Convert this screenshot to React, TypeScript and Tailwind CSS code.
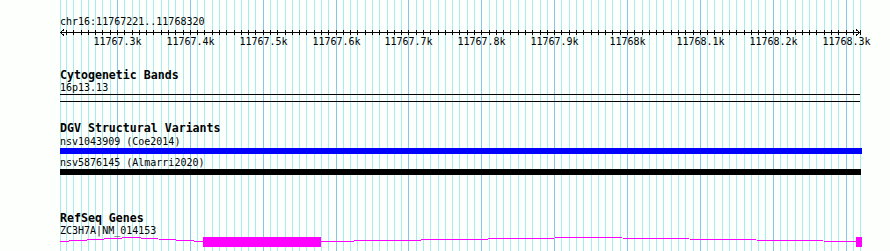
import React from "react";

const START = 11767221;
const px = (bp: number) => Math.floor(60 + (bp - START) * 0.7285);

const gridBps: number[] = [];
for (let bp = 11767220; bp <= 11768320; bp += 10) gridBps.push(bp);

const majors = [
  { bp: 11767300, label: "11767.3k" },
  { bp: 11767400, label: "11767.4k" },
  { bp: 11767500, label: "11767.5k" },
  { bp: 11767600, label: "11767.6k" },
  { bp: 11767700, label: "11767.7k" },
  { bp: 11767800, label: "11767.8k" },
  { bp: 11767900, label: "11767.9k" },
  { bp: 11768000, label: "11768k" },
  { bp: 11768100, label: "11768.1k" },
  { bp: 11768200, label: "11768.2k" },
  { bp: 11768300, label: "11768.3k" },
];

const mono = "'DejaVu Sans Mono', 'Liberation Mono', monospace";

function Grid() {
  return (
    <svg className="absolute inset-0" width={890} height={251} shapeRendering="crispEdges">
      {gridBps.map((bp) => {
        const x = Math.max(60, px(bp)) + 0.5;
        const major = bp % 100 === 0;
        return (
          <line key={bp} x1={x} x2={x} y1={0} y2={251} stroke={major ? "#84c6ec" : "#a8ecf0"} strokeWidth={1} />
        );
      })}
    </svg>
  );
}

function Ruler() {
  const ticks = gridBps.filter((bp) => bp >= START && bp <= 11768320);
  return (
    <svg width={802} height={20} shapeRendering="crispEdges" className="block overflow-visible" overflow="visible">
      <line x1={0} x2={800} y1={4.5} y2={4.5} stroke="#000" />
      <polyline points="4,1.5 0.5,4.5 4,7.5" fill="none" stroke="#000" />
      <polyline points="796,1.5 799.5,4.5 796,7.5" fill="none" stroke="#000" />
      {ticks.map((bp) => {
        const x = px(bp) - 60 + 0.5;
        return <line key={bp} x1={x} x2={x} y1={2} y2={7} stroke="#000" />;
      })}
      {majors.map((m) => (
        <text
          key={m.bp}
          x={px(m.bp) - 60 + 0.5}
          y={17}
          textAnchor="middle"
          fontFamily={mono}
          fontSize={10}
          fill="#000"
          shapeRendering="auto"
        >
          {m.label}
        </text>
      ))}
    </svg>
  );
}

function Gene() {
  return (
    <svg width={802} height={10} shapeRendering="crispEdges" className="block">
      <polyline points="0,4.5 71.5,0.5 143,4.5" fill="none" stroke="#ff00ff" />
      <rect x={143} y={0} width={118} height={10} fill="#ff00ff" />
      <polyline points="261,4.5 528.5,0.5 796,4.5" fill="none" stroke="#ff00ff" />
      <rect x={796} y={0} width={6} height={10} fill="#ff00ff" />
    </svg>
  );
}

export default function App() {
  return (
    <div className="relative w-[890px] h-[251px] overflow-hidden bg-[#fcfffc] text-black" style={{ fontFamily: mono }}>
      <Grid />
      <div className="relative flex flex-col pl-[60px] pt-[15px]">
        <div className="text-[10px] leading-[13px]">chr16:11767221..11768320</div>
        <Ruler />
        <div className="mt-[21px] text-[11.6px] leading-[12px] font-bold">Cytogenetic Bands</div>
        <div className="text-[10px] leading-[13px]">16p13.13</div>
        <div className="w-[800px] h-[8px] border-y border-black" />
        <div className="mt-[20px] text-[11.6px] leading-[13px] font-bold">DGV Structural Variants</div>
        <div className="text-[10px] leading-[13px]">nsv1043909 (Coe2014)</div>
        <div className="w-[802px] h-[6px] bg-[#0000ff]" />
        <div className="mt-[2px] text-[10px] leading-[13px]">nsv5876145 (Almarri2020)</div>
        <div className="w-[801px] h-[6px] bg-black" />
        <div className="mt-[37px] text-[11.6px] leading-[12px] font-bold">RefSeq Genes</div>
        <div className="text-[10px] leading-[13px]">ZC3H7A|NM_014153</div>
        <Gene />
      </div>
    </div>
  );
}
